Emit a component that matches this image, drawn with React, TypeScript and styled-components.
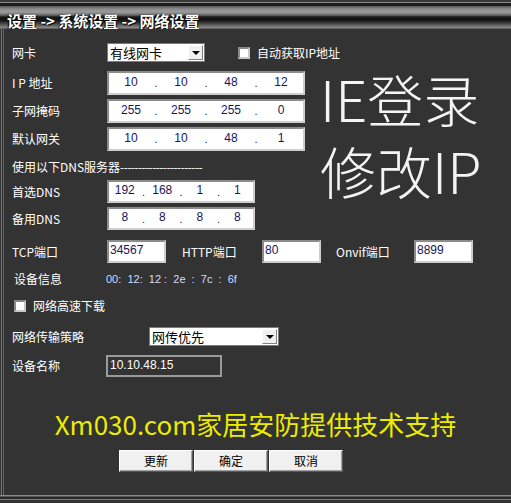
import React from 'react';
import styled, { createGlobalStyle } from 'styled-components';

const GlobalStyle = createGlobalStyle`
  html, body {
    margin: 0;
    padding: 0;
    background: #333;
  }
  body {
    font-family: "Noto Sans CJK SC", "Liberation Sans", sans-serif;
  }
`;

const CJK = '"Noto Sans CJK SC", "Liberation Sans", sans-serif';
const NUM = '"Liberation Sans", "Noto Sans CJK SC", sans-serif';

const Frame = styled.div`
  width: 511px;
  height: 503px;
  background: #333;
  overflow: hidden;
  display: flex;
  flex-direction: column;
`;

const TitleBar = styled.div`
  flex: none;
  height: 29px;
  box-sizing: border-box;
  padding: 11px 0 0 7px;
  display: flex;
  align-items: center;
  color: #fff;
  font: bold 15px/1 ${CJK};
  text-shadow: 1px 1px 1px #000, -1px 0 1px #000;
  white-space: pre;
  background: linear-gradient(
    to bottom,
    #3a3a3a 0px,
    #3a3a3a 2px,
    #8a8a8a 2px,
    #8a8a8a 3px,
    #1c1c1c 3px,
    #1c1c1c 6px,
    #555 6px,
    #8c8c8c 9px,
    #9c9c9c 12px,
    #6a6a6a 15px,
    #181818 17px,
    #121212 20px,
    #3c3c3c 23px,
    #6e6e6e 26px,
    #8a8a8a 28px,
    #3a3a3a 29px
  );
`;

const Body = styled.div`
  flex: 1;
  display: flex;
  flex-direction: column;
  background: linear-gradient(
    to right,
    #333 0 1px,
    #7a7a7a 1px 2px,
    #2a2a2a 2px 3px,
    #666 3px 4px,
    #333 4px
  );
`;

const BottomEdge = styled.div`
  flex: none;
  height: 8px;
  background: linear-gradient(
    to bottom,
    #8a8a8a 0 1px,
    #555 1px 2px,
    #2a2a2a 2px 4px,
    #7a7a7a 4px 5px,
    #333 5px
  );
`;

const Form = styled.div`
  padding-left: 12px;
  display: flex;
  flex-direction: column;
`;

const Row = styled.div<{ $top: number; $h: number }>`
  display: flex;
  align-items: center;
  height: ${({ $h }) => $h}px;
  margin-top: ${({ $top }) => $top}px;
`;

const Label = styled.span<{ $w?: number; $indent?: number }>`
  flex: none;
  box-sizing: border-box;
  width: ${({ $w }) => $w ?? 95}px;
  padding-left: ${({ $indent }) => $indent ?? 0}px;
  color: #fff;
  font: 12px/1 ${CJK};
  white-space: pre;
`;

const Middle = styled.div`
  display: flex;
  margin-top: 9px;
`;

const LeftCol = styled.div`
  width: 293px;
  flex: none;
  display: flex;
  flex-direction: column;
`;

const BigText = styled.div`
  margin-left: 15px;
  margin-top: -3px;
  display: flex;
  flex-direction: column;
  gap: 12px;
  color: #f4f4f4;
  font: 300 56px/60px ${CJK};
  white-space: nowrap;
`;

const IpBox = styled.div<{ $w: number; $h: number }>`
  box-sizing: border-box;
  width: ${({ $w }) => $w}px;
  height: ${({ $h }) => $h}px;
  background: #fff;
  border: 2px solid;
  border-color: #8c8c8c #cfcfcf #cfcfcf #8c8c8c;
  display: flex;
  align-items: center;
  padding-bottom: 3px;
  color: #16165c;
  font: 12px/1 ${NUM};
`;

const Seg = styled.span`
  flex: 1;
  text-align: center;
`;

const Dot = styled.span`
  width: 6px;
  text-align: center;
  padding-top: 4px;
  font-size: 11px;
`;

const PortBox = styled.div<{ $after?: number }>`
  box-sizing: border-box;
  width: 59px;
  height: 23px;
  flex: none;
  margin-right: ${({ $after }) => $after ?? 0}px;
  background: #fff;
  border: 2px solid;
  border-color: #8c8c8c #cfcfcf #cfcfcf #8c8c8c;
  padding: 0 0 3px 1px;
  display: flex;
  align-items: center;
  color: #16165c;
  font: 12px/1 ${NUM};
`;

const NameBox = styled.div`
  box-sizing: border-box;
  width: 116px;
  height: 22px;
  background: #333;
  border: 2px solid #9a9a9a;
  padding: 0 0 2px 2px;
  display: flex;
  align-items: center;
  color: #fff;
  font: 12px/1 ${NUM};
`;

const Select = styled.div<{ $w: number }>`
  box-sizing: border-box;
  width: ${({ $w }) => $w}px;
  height: 19px;
  flex: none;
  background: #fff;
  border: 1px solid #7a7a7a;
  padding-left: 2px;
  display: flex;
  align-items: center;
  justify-content: space-between;
  color: #000;
  font: 13px/1 ${CJK};
`;

const SelectButton = styled.span`
  box-sizing: border-box;
  width: 15px;
  height: 15px;
  margin-right: 1px;
  background: #f0f0f0;
  border: 1px solid;
  border-color: #fff #808080 #808080 #fff;
  display: flex;
  align-items: center;
  justify-content: center;

  &::after {
    content: '';
    border-left: 4px solid transparent;
    border-right: 4px solid transparent;
    border-top: 4px solid #000;
  }
`;

const Check = styled.span<{ $left?: number }>`
  box-sizing: border-box;
  width: 12px;
  height: 12px;
  flex: none;
  margin-left: ${({ $left }) => $left ?? 0}px;
  background: #fff;
  border: 2px solid;
  border-color: #8a8a8a #c8c8c8 #c8c8c8 #8a8a8a;
`;

const CheckText = styled.span`
  margin-left: 7px;
  color: #fff;
  font: 12px/1 ${CJK};
  white-space: nowrap;
`;

const Mac = styled.span`
  color: #cfdcff;
  font: 11px/1 ${NUM};
  white-space: pre;
`;

const Dashes = styled.span`
  letter-spacing: -0.6px;
`;

const Slogan = styled.div`
  margin-top: 32px;
  height: 30px;
  display: flex;
  align-items: center;
  justify-content: center;
  color: #ecec00;
  font: 26px/1 ${CJK};
  white-space: nowrap;
`;

const Buttons = styled.div`
  display: flex;
  gap: 1px;
  margin: 11px 0 0 119px;
`;

const Button = styled.button`
  box-sizing: border-box;
  width: 74px;
  height: 22px;
  padding: 0;
  background: #f0f0f0;
  border: 1px solid;
  border-color: #fff #5a5a5a #5a5a5a #fff;
  box-shadow: inset -1px -1px 0 #a0a0a0;
  color: #000;
  font: 12px/1 ${CJK};
`;

const IpField: React.FC<{ parts: string[]; w: number; h: number }> = ({ parts, w, h }) => (
  <IpBox $w={w} $h={h}>
    {parts.map((p, i) => (
      <React.Fragment key={i}>
        {i > 0 && <Dot>.</Dot>}
        <Seg>{p}</Seg>
      </React.Fragment>
    ))}
  </IpBox>
);

const App: React.FC = () => (
  <Frame>
    <GlobalStyle />
    <TitleBar>设置 -&gt; 系统设置 -&gt; 网络设置</TitleBar>
    <Body>
      <Form>
        <Row $top={14} $h={19}>
          <Label>网卡</Label>
          <Select $w={98}>
            有线网卡
            <SelectButton />
          </Select>
          <Check $left={33} />
          <CheckText>自动获取IP地址</CheckText>
        </Row>

        <Middle>
          <LeftCol>
            <Row $top={0} $h={24}>
              <Label>I P 地址</Label>
              <IpField parts={['10', '10', '48', '12']} w={198} h={24} />
            </Row>
            <Row $top={4} $h={24}>
              <Label>子网掩码</Label>
              <IpField parts={['255', '255', '255', '0']} w={198} h={24} />
            </Row>
            <Row $top={4} $h={24}>
              <Label>默认网关</Label>
              <IpField parts={['10', '10', '48', '1']} w={198} h={24} />
            </Row>
            <Row $top={8} $h={16}>
              <Label $w={260}>
                使用以下DNS服务器<Dashes>-----------------------</Dashes>
              </Label>
            </Row>
            <Row $top={5} $h={23}>
              <Label>首选DNS</Label>
              <IpField parts={['192', '168', '1', '1']} w={148} h={23} />
            </Row>
            <Row $top={4} $h={23}>
              <Label>备用DNS</Label>
              <IpField parts={['8', '8', '8', '8']} w={148} h={23} />
            </Row>
          </LeftCol>
          <BigText>
            <span>IE登录</span>
            <span>修改IP</span>
          </BigText>
        </Middle>

        <Row $top={10} $h={23}>
          <Label>TCP端口</Label>
          <PortBox $after={16}>34567</PortBox>
          <Label $w={80}>HTTP端口</Label>
          <PortBox $after={15}>80</PortBox>
          <Label $w={78}>Onvif端口</Label>
          <PortBox>8899</PortBox>
        </Row>
        <Row $top={8} $h={16}>
          <Label $w={94} $indent={2}>设备信息</Label>
          <Mac>00:  12:  12 :  2e  :  7c  :  6f</Mac>
        </Row>
        <Row $top={12} $h={14}>
          <Check $left={2} />
          <CheckText>网络高速下载</CheckText>
        </Row>
        <Row $top={14} $h={19}>
          <Label $w={137}>网络传输策略</Label>
          <Select $w={130}>
            网传优先
            <SelectButton />
          </Select>
        </Row>
        <Row $top={9} $h={22}>
          <Label $w={94}>设备名称</Label>
          <NameBox>10.10.48.15</NameBox>
        </Row>
      </Form>

      <Slogan>Xm030.com家居安防提供技术支持</Slogan>
      <Buttons>
        <Button>更新</Button>
        <Button>确定</Button>
        <Button>取消</Button>
      </Buttons>
    </Body>
    <BottomEdge />
  </Frame>
);

export default App;
